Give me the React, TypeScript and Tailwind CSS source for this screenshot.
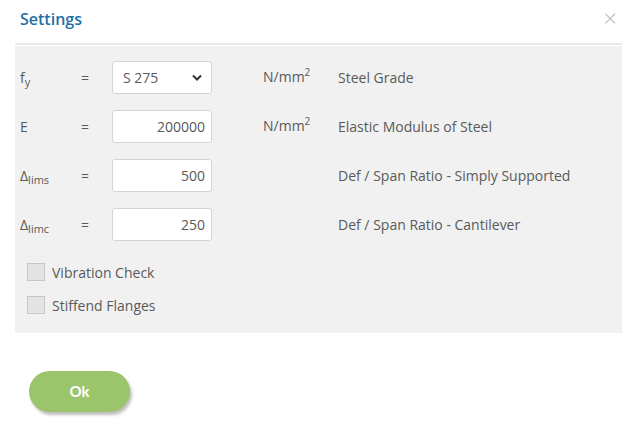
import React from "react";

const rows = [
  { sym: "f", sub: "y", kind: "select", value: "S 275", unit: true, desc: "Steel Grade" },
  { sym: "E", sub: "", kind: "input", value: "200000", unit: true, desc: "Elastic Modulus of Steel" },
  { sym: "Δ", sub: "lims", kind: "input", value: "500", unit: false, desc: "Def / Span Ratio - Simply Supported" },
  { sym: "Δ", sub: "limc", kind: "input", value: "250", unit: false, desc: "Def / Span Ratio - Cantilever" },
];

export default function App() {
  return (
    <div
      className="w-[637px] h-[439px] bg-white text-[#5a5a5a] text-[14px] overflow-hidden"
      style={{ fontFamily: '"Open Sans", "Liberation Sans", sans-serif' }}
    >
      {/* header */}
      <div className="flex items-center justify-between pl-[20px] pr-[20px] h-[37px] pt-[1px]">
        <h2 className="text-[16px] font-semibold text-[#1f6fa8]">Settings</h2>
        <span className="text-[24px] leading-none text-[#bdbdbd] font-light -mt-[2px]">×</span>
      </div>
      <div className="mx-[15px] h-[2px] mt-[6px] bg-[#e9e9e9]" />

      {/* body */}
      <div className="mx-[15px] mt-[1px] h-[287px] bg-[#f1f1f1] pl-[5px] pt-[15px] flex flex-col">
        <div className="flex flex-col gap-[16px]">
          {rows.map((r, i) => (
            <div key={i} className="flex items-center h-[33px]">
              <div className="w-[60px] leading-none">
                {r.sym}
                {r.sub && (
                  <span className="text-[11px] relative top-[3px] leading-none">{r.sub}</span>
                )}
              </div>
              <div className="w-[32px] pl-[1px]">=</div>
              {r.kind === "select" ? (
                <div className="w-[100px] h-[33px] bg-white border border-[#d4d4d4] rounded-[3px] flex items-center justify-between pl-[10px] pr-[9px]">
                  <span>S 275</span>
                  <svg width="10" height="7" viewBox="0 0 10 7">
                    <path d="M1 1.5 L5 5.5 L9 1.5" fill="none" stroke="#333" strokeWidth="2" />
                  </svg>
                </div>
              ) : (
                <div className="w-[100px] h-[33px] bg-white border border-[#d4d4d4] rounded-[3px] flex items-center justify-end pr-[6px]">
                  {r.value}
                </div>
              )}
              <div className="w-[51px]" />
              <div className="w-[75px] leading-none -mt-[1px]">
                {r.unit && (
                  <>
                    N/mm<span className="text-[10px] relative -top-[6px] leading-none">2</span>
                  </>
                )}
              </div>
              <div>{r.desc}</div>
            </div>
          ))}
        </div>

        <div className="flex flex-col gap-[15px] mt-[22px] pl-[7px]">
          {["Vibration Check", "Stiffend Flanges"].map((t) => (
            <label key={t} className="flex items-center gap-[7px] h-[18px]">
              <span className="w-[18px] h-[18px] bg-[#e4e4e4] border border-[#c6c6c6]" />
              <span>{t}</span>
            </label>
          ))}
        </div>
      </div>

      {/* footer */}
      <div className="pl-[29px] pt-[38px]">
        <button
          className="w-[101px] h-[41px] rounded-full bg-[#9bc56b] text-white text-[15px] font-bold shadow-[2px_3px_3px_rgba(0,0,0,0.25)]"
          style={{ fontFamily: '"Lato", "Open Sans", sans-serif' }}
        >
          Ok
        </button>
      </div>
    </div>
  );
}
